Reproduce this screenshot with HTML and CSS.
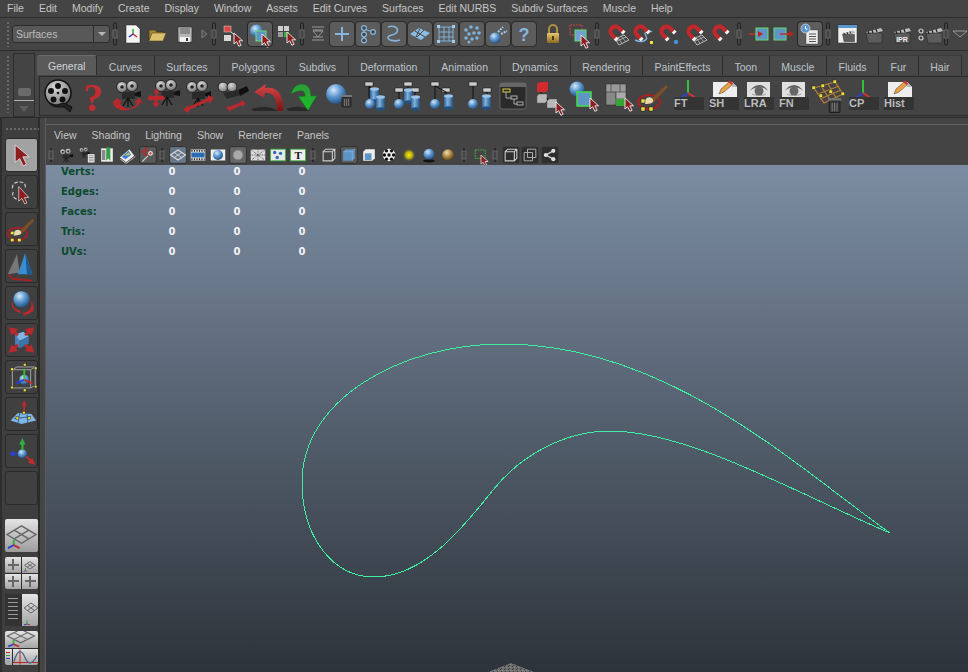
FILE: index.html
```html
<!DOCTYPE html>
<html lang="en">
<head>
<meta charset="utf-8">
<title>Maya</title>
<link rel="stylesheet" href="styles.css">
</head>
<body>
<svg class="defs" aria-hidden="true">
<defs>
<radialGradient id="gBall" cx=".38" cy=".3" r=".8"><stop offset="0" stop-color="#d5e8f8"/><stop offset=".45" stop-color="#5c97cf"/><stop offset="1" stop-color="#173f6f"/></radialGradient>
<radialGradient id="gYel" cx=".5" cy=".5" r=".5"><stop offset="0" stop-color="#f4f000"/><stop offset=".55" stop-color="#b5ae10"/><stop offset="1" stop-color="#55553a" stop-opacity=".2"/></radialGradient>
<radialGradient id="gBrn" cx=".4" cy=".3" r=".8"><stop offset="0" stop-color="#f0dfb0"/><stop offset=".5" stop-color="#a67f3a"/><stop offset="1" stop-color="#3a2c12"/></radialGradient>
<radialGradient id="gReel" cx=".4" cy=".3" r=".8"><stop offset="0" stop-color="#d8d8d8"/><stop offset="1" stop-color="#6a6a6a"/></radialGradient>
<linearGradient id="gCyl" x1="0" x2="1" y1="0" y2="0"><stop offset="0" stop-color="#2f6398"/><stop offset=".4" stop-color="#7fb2de"/><stop offset="1" stop-color="#24507f"/></linearGradient>
<linearGradient id="gRed" x1="0" x2="0" y1="0" y2="1"><stop offset="0" stop-color="#d8484a"/><stop offset="1" stop-color="#7a1214"/></linearGradient>
<linearGradient id="gGold" x1="0" x2="0" y1="0" y2="1"><stop offset="0" stop-color="#e8c872"/><stop offset="1" stop-color="#8a6a20"/></linearGradient>
<linearGradient id="gGrn" x1="0" x2="0" y1="0" y2="1"><stop offset="0" stop-color="#2f9a3a"/><stop offset="1" stop-color="#18c028"/></linearGradient>
<pattern id="pNoise" width="4" height="3" patternUnits="userSpaceOnUse"><rect width="4" height="3" fill="#6e6e6e"/><rect width="1" height="1" fill="#3a3f46"/><rect x="2" y="1" width="1" height="1" fill="#8c8c8c"/><rect x="1" y="2" width="1" height="1" fill="#3a3f46"/></pattern>

<path id="cur" d="M0 0v11l2.600-2.300 2.300 4.600 2.200-1-2.200-4.500H8.600z" fill="#8d1c1e" stroke="#eee" stroke-width=".9"/>
<g id="sep"><rect x="10.500" y="1" width="3" height="22" rx="1" fill="none" stroke="#222" stroke-width="1"/><rect x="10" y="8" width="4" height="8" fill="#444" stroke="#777" stroke-width=".7"/></g>
<g id="sepS"><rect x="11" y="3" width="2" height="14" fill="#2a2a2a"/><rect x="10" y="6" width="4" height="8" fill="#444" stroke="#777" stroke-width=".7"/></g>

<g id="doc"><path d="M5 3h10l4 4v14H5z" fill="#f4f4f4" stroke="#222" stroke-width=".5"/><path d="M12 12V7" stroke="#2a2" stroke-width="1.400"/><path d="M12 12l-4 3" stroke="#22c" stroke-width="1.400"/><path d="M12 12l4 3" stroke="#c22" stroke-width="1.400"/></g>
<g id="folder"><path d="M4 18V8h6l2 2h6v3H8z" fill="#a08838" stroke="#3a3010" stroke-width=".6"/><path d="M4 19l3-8h14l-3 8z" fill="#dcc070" stroke="#5a4a18" stroke-width=".6"/></g>
<g id="save"><path d="M5 5h14v15H5z" fill="#b5b5b5" stroke="#333" stroke-width=".7"/><rect x="7" y="5" width="10" height="7" fill="#8a8a8a"/><rect x="7" y="15" width="10" height="5" fill="#f0f0f0"/><rect x="13" y="16" width="2" height="3" fill="#333"/></g>
<path id="triR" d="M10 8l5 4-5 4z" fill="#505050" stroke="#888" stroke-width=".8"/>
<g id="hier"><rect x="3" y="4" width="7" height="6" fill="#d84a4a" stroke="#eee" stroke-width=".4"/><rect x="3" y="13" width="7" height="6" fill="#d8d8d8"/><path d="M10 10l5 4" stroke="#ddd"/><use href="#cur" x="13" y="11"/></g>
<g id="obj"><circle cx="8.500" cy="9" r="6.500" fill="url(#gBall)"/><rect x="8" y="9" width="10" height="10" fill="#5f94c6" stroke="#6fdc6f" stroke-width="1"/><use href="#cur" x="14" y="12"/></g>
<g id="comp"><rect x="4" y="4" width="5" height="5" fill="#cfcfcf"/><rect x="10" y="4" width="5" height="5" fill="#cfcfcf"/><rect x="4" y="10" width="5" height="5" fill="#9a9a9a"/><rect x="10" y="10" width="5" height="5" fill="#38b038"/><use href="#cur" x="13" y="10"/></g>
<g id="lines"><path d="M6 5h12M7 8h10M6 18h12M7 15h10" stroke="#999"/><path d="M7 9h10l-5 6z" fill="#444" stroke="#aaa" stroke-width=".8"/></g>
<g id="plus"><path d="M12 5v14M5 12h14" stroke="#87b5dc" stroke-width="2"/></g>
<g id="cv"><path d="M8 6v12M8 7l9 3" stroke="#87b5dc" stroke-width="1.200"/><circle cx="8" cy="6" r="2.400" fill="#444" stroke="#87b5dc" stroke-width="1.200"/><circle cx="8" cy="12.500" r="2.400" fill="#444" stroke="#87b5dc" stroke-width="1.200"/><circle cx="8" cy="18.500" r="2.400" fill="#444" stroke="#87b5dc" stroke-width="1.200"/><circle cx="17" cy="10" r="2.400" fill="#444" stroke="#87b5dc" stroke-width="1.200"/></g>
<path id="ep" d="M6 5c6-2 11 1 9 5s-8 2-9 5 6 5 12 3" fill="none" stroke="#87b5dc" stroke-width="1.600"/>
<g id="quad"><path d="M2 12L11 6l11 5-9 7z" fill="#8abce4"/><path d="M7 9l10 6M12 6.500L8 15M16 8l-7 7" stroke="#444" stroke-width="1"/></g>
<g id="latt"><path d="M5 5h14v14H5zM10 5v14M15 5v14M5 10h14M5 15h14" fill="none" stroke="#7fb0d8" stroke-width="1"/><g fill="#9fcdf0"><rect x="3" y="3" width="3" height="3"/><rect x="18" y="3" width="3" height="3"/><rect x="3" y="18" width="3" height="3"/><rect x="18" y="18" width="3" height="3"/></g></g>
<g id="dots" fill="#7fb0d8"><circle cx="6" cy="8" r="1.800"/><circle cx="11" cy="5" r="1.800"/><circle cx="17" cy="6" r="1.800"/><circle cx="9" cy="12" r="1.800"/><circle cx="14" cy="11" r="1.800"/><circle cx="19" cy="11" r="1.800"/><circle cx="6" cy="16" r="1.800"/><circle cx="12" cy="17" r="1.800"/><circle cx="17" cy="16" r="1.800"/><circle cx="9" cy="20" r="1.600"/></g>
<g id="spray"><circle cx="9" cy="16" r="5.500" fill="url(#gBall)"/><path d="M12 10l5-5M15 12l6-3" stroke="#9fcdf0" stroke-width="2" stroke-dasharray="2 1"/></g>
<text id="qm" x="12" y="19" font-family="Liberation Sans" font-weight="700" font-size="18" text-anchor="middle" fill="#87b5dc">?</text>
<g id="lock"><path d="M8 11V7a4 4 0 018 0v4" fill="none" stroke="#b09040" stroke-width="2"/><rect x="6" y="11" width="12" height="10" rx="1" fill="url(#gGold)"/><rect x="11" y="14" width="2" height="4" fill="#4a3a10"/></g>
<g id="selbox"><rect x="2" y="3" width="12" height="10" fill="none" stroke="#d04040" stroke-dasharray="2 1"/><rect x="7" y="8" width="11" height="11" fill="#6fa0cf" stroke="#66dd66" stroke-width="1"/><use href="#cur" x="13" y="13"/></g>
<g id="mag"><path d="M11.500 17.500L6.500 12.500A5 5 0 0 1 13.500 5.500L18.500 10.500" fill="none" stroke="#c0282c" stroke-width="4"/><path d="M12.200 18.200l-2-2M19.200 11.200l-2-2" stroke="#f2f2f2" stroke-width="4"/></g>
<g id="mgrid"><path d="M10 17l9-4 5 5-10 5z" fill="#444" stroke="#bbb" stroke-width="1"/><path d="M13 15.500l4 6M16 14l5 6M12 19l9-4" stroke="#bbb" stroke-width=".8"/><use href="#mag"/></g>
<g id="mcurve"><path d="M5 18c6 3 14 1 11-4s2-7 6-4" fill="none" stroke="#7fb0d8" stroke-width="1.400"/><use href="#mag"/><rect x="20" y="19" width="3" height="3" fill="#f0e040"/></g>
<g id="mpt"><use href="#mag"/><circle cx="20" cy="20" r="2.200" fill="#4a90d8"/></g>
<g id="iofrom"><path d="M1 12h8" stroke="#c03030" stroke-width="1.500"/><rect x="8" y="6" width="12" height="12" fill="#5f94c6" stroke="#66dd66"/><path d="M10 9l5 3-5 3z" fill="#c02020"/></g>
<g id="ioto"><rect x="2" y="6" width="12" height="12" fill="#5f94c6" stroke="#66dd66"/><path d="M8 12h10" stroke="#c03030" stroke-width="1.500"/><path d="M17 9l5 3-5 3z" fill="#c02020"/></g>
<g id="hist"><path d="M8 8h12v14H8z" fill="#ececec" stroke="#333" stroke-width=".4"/><path d="M11 12h7M11 14.500h7M11 17h7M11 19.500h7" stroke="#555"/><circle cx="7.500" cy="6.500" r="4.500" fill="#5c97cf" stroke="#ddd" stroke-width=".7"/><path d="M7.500 4v3h2" stroke="#fff" fill="none"/></g>
<g id="clap"><path d="M4 10l15-4 2 3-15 4z" fill="#bbb"/><path d="M4 11h16v10H6z" fill="#5c5c5c" stroke="#222" stroke-width=".5"/><path d="M6 9l1 3M10 8l1 3M14 7l1 3" stroke="#222" stroke-width="1.200"/></g>
<g id="clapW"><rect x="2" y="3" width="19" height="18" fill="#f0f0f0" stroke="#222" stroke-width=".5"/><rect x="2" y="3" width="19" height="3" fill="#5c97cf"/><use href="#clap" transform="translate(3.500 4) scale(.75)"/></g>
<g id="clapI"><use href="#clap"/><text x="12" y="20" font-family="Liberation Sans" font-weight="700" font-size="7" text-anchor="middle" fill="#eee">IPR</text></g>
<g id="clapO"><use href="#clap" transform="translate(5 0)"/><circle cx="4" cy="9" r="2" fill="none" stroke="#ccc" stroke-width="1.200"/><circle cx="4" cy="16" r="2" fill="none" stroke="#ccc" stroke-width="1.200"/></g>
<path id="triD" d="M5 9h14l-7 6z" fill="#444" stroke="#999"/>

<g id="reel"><circle cx="17" cy="14" r="13" fill="url(#gReel)" stroke="#111" stroke-width="1.500"/><g fill="#111"><circle cx="17" cy="7" r="3"/><circle cx="24" cy="12" r="3"/><circle cx="21.500" cy="20.500" r="3"/><circle cx="12.500" cy="20.500" r="3"/><circle cx="10" cy="12" r="3"/></g><circle cx="17" cy="14" r="1.300" fill="#111"/><path d="M8 24c4 5 10 4 15 4l6 5 2-5-8-4-8 2z" fill="#222" stroke="#111"/></g>
<text id="qr" x="17" y="32" font-family="Liberation Serif" font-weight="700" font-size="40" text-anchor="middle" fill="#c22c30">?</text>
<g id="cam"><circle cx="11" cy="8" r="5.500" fill="url(#gReel)" stroke="#222"/><circle cx="21" cy="7" r="5.500" fill="url(#gReel)" stroke="#222"/><circle cx="11" cy="8" r="1.800" fill="#222"/><circle cx="21" cy="7" r="1.800" fill="#222"/><path d="M11 13h13v7H11z" fill="#2a2a2a"/><path d="M24 14l6-2v6l-6-1z" fill="#111"/><path d="M17 19v9M17 19l-5 8M17 19l5 8" stroke="#111" stroke-width="1.200"/></g>
<g id="cam1"><use href="#cam"/><path d="M2 23c1 8 10 9 15 8s11-3 12-8l3 2-3-6-6 4 3 .5c-1 4-5 6-9 6s-7-3-8-6l2-.5-5-4z" fill="#b8282c"/></g>
<g id="cam2"><use href="#cam" transform="translate(4 -1)"/><path d="M10 9l3.500 5h-2v3h4l-1-2 5 4-5 4 1-2h-4v3h2l-3.500 5-3.500-5h2v-3H5l1 2-5-4 5-4-1 2h4.500v-3h-2z" fill="#b8282c"/></g>
<g id="cam3"><use href="#cam"/><path d="M2 31l5-5v2l20-9v-3l6 3-5 6v-3L8 31v3z" fill="#b8282c"/></g>
<g id="cam4"><circle cx="7" cy="8" r="5" fill="url(#gReel)" stroke="#222"/><circle cx="16" cy="8" r="5" fill="url(#gReel)" stroke="#222"/><path d="M7 14l14-3 3 5-13 4z" fill="#2a2a2a"/><path d="M22 11l9-4 2 5-9 5z" fill="#111"/><path d="M10 29l3-3v2l12-5v-2l5 3-4 4v-2L15 31v2z" fill="#b8282c"/></g>
<g id="undo"><path d="M0 30c8-2 14-3 24 0l3 2H3z" fill="#1e1e1e" opacity=".7"/><path d="M3 13L15 5l-1 4c11-2 19 5 18 23h-6c0-13-4-19-12-18l-1 5z" fill="url(#gRed)"/></g>
<g id="redo"><path d="M0 30c8-3 14-3 22 0l2 2H3z" fill="#1e1e1e" opacity=".7"/><path d="M5 15C7 6 15 3 20 6c4 2 5 7 5 11l6-.5-9 15-10-14 7-.5c0-3-1-5-4-5s-6 1-10 3z" fill="url(#gGrn)" stroke="#125c1a" stroke-width=".5"/></g>
<g id="trash"><rect x="1" y="3" width="9" height="10" rx="1" fill="#3a3a3a" stroke="#111" stroke-width=".6"/><rect y="1" width="11" height="2" fill="#777"/><path d="M3.500 5v7M5.500 5v7M7.500 5v7" stroke="#8a8a8a" stroke-width=".7"/></g>
<g id="balltr"><circle cx="15" cy="15" r="10" fill="url(#gBall)"/><use href="#trash" x="20" y="15"/></g>
<g id="ball"><circle cx="5" cy="5" r="5" fill="url(#gBall)"/></g>
<g id="cyl"><rect width="9" height="12" fill="url(#gCyl)"/><ellipse cx="4.500" cy="12" rx="4.500" ry="1.800" fill="#24507f"/><ellipse cx="4.500" cy="0" rx="4.500" ry="1.800" fill="#9ac4e8"/></g>
<rect id="tag" width="8" height="4" fill="#ccc" stroke="#111" stroke-width=".5"/>
<g id="g1"><use href="#tag" x="9" y="3"/><path d="M13 7v12M13 7l9 9M13 7l4 6" stroke="#111"/><use href="#cyl" x="14" y="10"/><use href="#cyl" x="20" y="18"/><use href="#ball" x="9" y="20"/></g>
<g id="g2"><use href="#tag" x="13" y="3"/><use href="#tag" x="4" y="9"/><use href="#tag" x="20" y="9"/><path d="M17 7v8M8 13v8M24 13v8" stroke="#111"/><use href="#cyl" x="13" y="11"/><use href="#cyl" x="20" y="18"/><use href="#ball" x="3" y="20"/></g>
<g id="g3"><use href="#tag" x="5" y="3"/><use href="#tag" x="16" y="9"/><path d="M9 7v14M9 7l11 6M20 13v6" stroke="#111"/><use href="#cyl" x="18" y="17"/><use href="#ball" x="4" y="20"/></g>
<g id="g4"><use href="#tag" x="8" y="3"/><use href="#tag" x="22" y="9"/><path d="M12 7v14M26 13v6" stroke="#111"/><use href="#cyl" x="21" y="17"/><use href="#ball" x="7" y="20"/></g>
<g id="outl"><rect x="4" y="4" width="26" height="26" rx="2" fill="#2a2a2a" stroke="#777" stroke-width=".7"/><rect x="4" y="4" width="26" height="4" fill="#666"/><rect x="7" y="10" width="7" height="3" fill="none" stroke="#e0d040"/><path d="M10 13v6h5M18 20v5h3" fill="none" stroke="#aaa"/><rect x="15" y="17" width="6" height="3" fill="none" stroke="#aaa"/><rect x="21" y="23" width="6" height="3" fill="none" stroke="#aaa"/></g>
<g id="nodes"><path d="M6 5l3-2h8v8l-2 2H6z" fill="#d22a2e"/><path d="M6 17l2-2h8v7l-2 2H6z" fill="#b8b8b8" stroke="#555" stroke-width=".5"/><path d="M16 22l2-2h8v7l-2 2h-8z" fill="#b8b8b8" stroke="#555" stroke-width=".5"/><path d="M10 13v2M16 19l1 2" stroke="#111"/><use href="#cur" x="25" y="23"/></g>
<g id="ballbox"><circle cx="11" cy="10" r="7.500" fill="url(#gBall)"/><path d="M11 13h14v14H11z" fill="#5f94c6" stroke="#44dd44" stroke-width="1.500"/><use href="#cur" x="24" y="19"/></g>
<g id="cube"><path d="M5 5h20v9H5z" fill="#9a9a9a" stroke="#333" stroke-width=".6"/><path d="M5 13h10v13H5z" fill="#888" stroke="#333" stroke-width=".6"/><path d="M15 13h10v7H15z" fill="#aaa" stroke="#333" stroke-width=".6"/><path d="M15 20h10v7H15z" fill="#36a536"/><path d="M10 5v8M19 5v8" stroke="#333" stroke-width=".6"/><use href="#cur" x="24" y="19"/></g>
<g id="paint"><ellipse cx="13" cy="23" rx="11" ry="7" fill="none" stroke="#a82024" stroke-width="2"/><path d="M14 21L30 6l2 2-15 16z" fill="#7a5028"/><path d="M9 21c3-4 7-3 8 0s-3 4-8 4z" fill="#e8d8b0"/><g fill="#e8e040" stroke="#222" stroke-width=".5"><rect x="5" y="20" width="4" height="4"/><rect x="13" y="28" width="4" height="4"/><rect x="5" y="28" width="4" height="4"/></g></g>
<g id="axes"><path d="M17 14V1" stroke="#35c035" stroke-width="2"/><path d="M17 14l-11 7" stroke="#2a40d8" stroke-width="2"/><path d="M17 14l11 7" stroke="#d83232" stroke-width="2"/></g>
<g id="pad"><path d="M7 3h19l5 5v10H7z" fill="#eee"/><path d="M26 3l5 5h-5z" fill="#bbb"/><path d="M13 15l2-5 8-7 3 3-8 7z" fill="#e8a040" stroke="#444" stroke-width=".5"/><path d="M22 3l2-1.500 3 3-1 1.500z" fill="#d03030"/></g>
<g id="eye"><rect x="6" y="3" width="23" height="15" fill="#e0e0e0"/><path d="M9 12c4-8 14-8 18 0-5-5-13-5-18 0z" fill="#666"/><circle cx="18" cy="12" r="4.500" fill="#666"/><path d="M11 15c4 2 10 2 14 0" stroke="#999" fill="none"/></g>
<g id="lgrid"><path d="M3 9L24 3l8 12-19 9zM10 7l10 15M17 5l8 14M7 15l21-8M9 20l21-9" fill="none" stroke="#b87f38" stroke-width="1.200"/><g fill="#e8e040" stroke="#222" stroke-width=".5"><rect x="1" y="7" width="3.500" height="3.500"/><rect x="10" y="5" width="3.500" height="3.500"/><rect x="22" y="1" width="3.500" height="3.500"/><rect x="30" y="13" width="3.500" height="3.500"/><rect x="18" y="11" width="3.500" height="3.500"/><rect x="8" y="15" width="3.500" height="3.500"/></g><use href="#trash" transform="translate(17 18) scale(1.200)"/></g>

<g id="v1"><use href="#cam" transform="translate(1 3) scale(.65)"/></g>
<g id="v2"><use href="#cam" transform="translate(0 2) scale(.5)"/><path d="M13 11h8v10h-8z" fill="#eee"/><path d="M14 13h6M14 15h6M14 17h6M14 19h6" stroke="#555" stroke-width=".7"/></g>
<g id="v3"><path d="M5 4h14v16H5z" fill="#eee"/><path d="M11 3h5v16l-2.500-3-2.500 3z" fill="#38a048"/><rect x="6" y="6" width="4" height="12" fill="#888"/></g>
<g id="v4"><path d="M3 15L15 5l6 8-10 8z" fill="#eee" stroke="#333" stroke-width=".5"/><path d="M6 14l8-7 3 5-7 5z" fill="#3c7ad0"/><path d="M9 13l5-4 2 3z" fill="#c8d030"/><path d="M4 17l7 5 11-8" fill="none" stroke="#ccc"/></g>
<g id="v5"><rect x="2" y="2" width="20" height="20" rx="2" fill="#5a5a5a" stroke="#2a2a2a"/><path d="M9 3v10M4 8h10M9 3l-2 2h4zM4 8l2-2v4zM14 8l-2-2v4zM9 13l-2-2h4z" stroke="#b02a2a" fill="#b02a2a"/><circle cx="15" cy="10" r="3.500" fill="#ddd" stroke="#444"/><path d="M13.500 10h3M15 8.500v3" stroke="#c22"/><path d="M12 13l-7 7" stroke="#ccc" stroke-width="1.500"/></g>
<g id="v6"><rect x="2" y="2" width="20" height="20" rx="2" fill="#68788a" stroke="#2a2a2a"/><path d="M3 12l9-6 9 6-9 6z" fill="none" stroke="#ddd" stroke-width="1.300"/><path d="M7.500 9l9 6M16.500 9l-9 6" stroke="#ddd" stroke-width="1"/></g>
<g id="v7"><rect x="3" y="5" width="18" height="14" fill="#eee" stroke="#222" stroke-width=".4"/><rect x="4" y="9" width="16" height="6" fill="#2c6cb0"/><path d="M4 7h16M4 17h16" stroke="#222" stroke-width="2" stroke-dasharray="1.500 1.500"/></g>
<g id="v8"><rect x="3" y="5" width="18" height="14" fill="#eee" stroke="#222" stroke-width=".4"/><circle cx="12" cy="12" r="6" fill="url(#gBall)"/></g>
<g id="v9"><rect x="2" y="2" width="20" height="20" rx="2" fill="#666" stroke="#2a2a2a"/><circle cx="12" cy="12" r="6" fill="#aaa" stroke="#777"/></g>
<g id="v10"><rect x="3" y="5" width="18" height="14" fill="#ddd" stroke="#222" stroke-width=".4"/><path d="M4 6l16 12M20 6L4 18M12 5v14M3 12h18" stroke="#333" stroke-width="1" stroke-dasharray="1 1"/></g>
<g id="v11"><rect x="3" y="5" width="18" height="14" fill="#e8e8e8" stroke="#3ab03a" stroke-width="1"/><circle cx="8" cy="9" r="2" fill="#2c6cb0"/><circle cx="15" cy="10" r="2" fill="#2c6cb0"/><circle cx="11" cy="15" r="2" fill="#2c6cb0"/></g>
<g id="v12"><rect x="3" y="5" width="18" height="14" fill="#eee" stroke="#3ab03a" stroke-width="1"/><text x="12" y="17" font-family="Liberation Serif" font-weight="700" font-size="13" text-anchor="middle" fill="#111">T</text></g>
<g id="vw"><path d="M5 8l3-3h11v11l-3 3H5zM5 8h11v11M16 8l3-3" fill="none" stroke="#ccc" stroke-width="1.300"/></g>
<g id="vs"><rect x="2" y="2" width="20" height="20" rx="2" fill="#5a5a5a" stroke="#2a2a2a"/><path d="M5 8l3-3h11v11l-3 3H5z" fill="#5f94c6"/><path d="M5 8h11v11M16 8l3-3" fill="none" stroke="#8fbbe0" stroke-width=".7"/></g>
<g id="vt"><path d="M5 8l3-3h11v11l-3 3H5z" fill="#eee"/><path d="M7 10h8v8H7z" fill="#5f94c6"/></g>
<g id="vc"><circle cx="12" cy="12" r="7.500" fill="#eee"/><g fill="#111"><circle cx="9" cy="7" r="2"/><circle cx="15" cy="7" r="2"/><circle cx="6.500" cy="12" r="2"/><circle cx="12" cy="12" r="2"/><circle cx="17.500" cy="12" r="2"/><circle cx="9" cy="17" r="2"/><circle cx="15" cy="17" r="2"/></g></g>
<circle id="vy" cx="12" cy="12" r="7.500" fill="url(#gYel)"/>
<g id="vb"><ellipse cx="12" cy="19" rx="7" ry="2" fill="#111"/><circle cx="12" cy="11" r="6.500" fill="url(#gBall)"/></g>
<circle id="vg" cx="12" cy="12" r="7" fill="url(#gBrn)"/>
<g id="vsel"><rect x="5" y="6" width="12" height="10" fill="none" stroke="#44cc44" stroke-dasharray="2 1"/><use href="#cur" x="12" y="12"/></g>
<g id="vd1"><rect x="2" y="2" width="20" height="20" rx="2" fill="#2e2e2e"/><use href="#vw"/></g>
<g id="vd2"><rect x="2" y="2" width="20" height="20" rx="2" fill="#2e2e2e"/><path d="M5 9h10v10H5zM9 5h10v10H9z" fill="none" stroke="#aaa" stroke-width="1.200"/></g>
<g id="vd3"><rect x="2" y="2" width="20" height="20" rx="2" fill="#2e2e2e"/><path d="M7 12l9-5M7 12l9 5" stroke="#ddd" stroke-width="1.500"/><circle cx="7" cy="12" r="2.500" fill="#ddd"/><circle cx="16" cy="7" r="2.500" fill="#ddd"/><circle cx="16" cy="17" r="2.500" fill="#ddd"/></g>

<g id="t1"><path d="M10 6v19l5-4 4 8 3.500-2-4-8h7z" fill="#8d1c1e" stroke="#ddd" stroke-width="1"/></g>
<g id="t2"><path d="M7 13c0-6 4-7 8-7s7 2 6 6M8 17c-2 3 0 7 4 8" fill="none" stroke="#ccc" stroke-width="1.300" stroke-dasharray="4 2"/><path d="M14 11v16l3.500-3 3 6 2.500-1-3-6h5z" fill="#8d1c1e" stroke="#ddd" stroke-width=".8"/></g>
<g id="t4"><path d="M2 26L12 4l3 20z" fill="#777"/><path d="M13 26L21 3l8 23z" fill="#3a8ed0"/><path d="M21 3l2 23h6z" fill="#1c5a94"/><path d="M3 26l4 5 21 2" fill="none" stroke="#a82024" stroke-width="2"/></g>
<g id="t5"><circle cx="17" cy="13" r="9" fill="url(#gBall)"/><path d="M7 14c-3 7 2 13 10 14l-2-3c-5 0-8-4-8-11z" fill="#b8282c"/><path d="M27 14c3 7-1 13-9 14l3 3 9-5c1-4 0-9-3-12z" fill="#b8282c"/></g>
<g id="t6"><path d="M10 11l9-3 6 5-10 5z" fill="#7fb6e6"/><path d="M10 11v11l5 4V18z" fill="#4a84ba"/><path d="M15 18v8l10-5v-8z" fill="#3a74aa"/><g fill="#b8282c"><path d="M3 3l10 2-2 3 3 3-2 2-3-3-3 2z"/><path d="M31 3l-10 2 2 3-3 3 2 2 3-3 3 2z"/><path d="M3 31l10-2-2-3 3-3-2-2-3 3-3-2z"/><path d="M31 31l-10-2 2-3-3-3 2-2 3 3 3-2z"/></g></g>
<g id="t7"><path d="M7 9h20v20H7zM7 9l5-3h20v20l-5 3M27 9l5-3" fill="none" stroke="#aaa"/><circle cx="20" cy="20" r="5.500" fill="url(#gBall)"/><path d="M20 20V8" stroke="#35c035" stroke-width="2"/><path d="M20 20l-9 4" stroke="#2a40d8" stroke-width="2"/><path d="M20 20l9 4" stroke="#c82a2a" stroke-width="2"/><g fill="#f0e040" stroke="#222" stroke-width=".5"><rect x="5" y="7" width="3" height="3"/><rect x="19" y="2" width="3" height="3"/><rect x="31" y="6" width="3" height="3"/><rect x="5" y="27" width="3" height="3"/><rect x="19" y="30" width="3" height="3"/><rect x="31" y="26" width="3" height="3"/></g></g>
<g id="t8"><path d="M20 3v16" stroke="#b8282c" stroke-width="2"/><path d="M17 8l3-6 3 6z" fill="#b8282c"/><path d="M5 24l8-8 15 1 5 7-16 4z" fill="#7fb6e6"/><path d="M9 22l18-2M15 16l-2 12M23 17l1 10" stroke="#2a5c8a"/><g fill="#f0e040" stroke="#222" stroke-width=".5"><rect x="18" y="14" width="3" height="3"/><rect x="11" y="20" width="3" height="3"/><rect x="24" y="20" width="3" height="3"/></g></g>
<g id="t9"><circle cx="18" cy="20" r="5" fill="url(#gBall)"/><path d="M18 16V7" stroke="#2fb03f" stroke-width="2.500"/><path d="M14.500 10L18 3l3.500 7z" fill="#2fb03f"/><path d="M13 20H7" stroke="#2a40d8" stroke-width="2"/><path d="M9 17l-6 3 6 3z" fill="#2a40d8"/><path d="M22 23l6 5" stroke="#c82a2a" stroke-width="2"/><path d="M24 30l8 2-3-7z" fill="#c82a2a"/></g>
<g id="l1"><path d="M2 16l15-9 15 9-15 9z M9.500 11.500l15 9M24.500 11.500l-15 9" fill="none" stroke="#666" stroke-width="1.500"/><path d="M9 27v-6" stroke="#2fb03f" stroke-width="2"/><path d="M9 27l-6 3" stroke="#2a40d8" stroke-width="2"/><path d="M9 27l6 3" stroke="#c82a2a" stroke-width="2"/></g>
<g id="l2"><path d="M2 9l6-4 6 4-6 4zM5 7l6 4M11 7l-6 4" fill="none" stroke="#666"/><path d="M3 15v-3" stroke="#2fb03f"/><path d="M3 15l-2 1" stroke="#2a40d8"/><path d="M3 15l2 1" stroke="#c82a2a"/></g>
<g id="l3"><path d="M2 14l7-5 7 5-7 5z M5.500 11.500l7 5M12.500 11.500l-7 5" fill="none" stroke="#666"/><path d="M5 30v-4" stroke="#2fb03f"/><path d="M5 30l-3 1" stroke="#2a40d8"/><path d="M5 30l3 1" stroke="#c82a2a"/></g>
</defs>
</svg>

<nav class="menubar">
<span>File</span><span>Edit</span><span>Modify</span><span>Create</span><span>Display</span><span>Window</span><span>Assets</span><span>Edit Curves</span><span>Surfaces</span><span>Edit NURBS</span><span>Subdiv Surfaces</span><span>Muscle</span><span>Help</span>
</nav>

<section class="status">
<i class="grip"></i>
<div class="combo"><span class="combo-text">Surfaces</span><span class="combo-arrow"></span></div>
<div class="icons st-first">
<svg class="ic" viewBox="0 0 24 24"><use href="#sep"/></svg>
<svg class="ic d18" viewBox="0 0 24 24"><use href="#doc"/></svg>
<svg class="ic d24" viewBox="0 0 24 24"><use href="#folder"/></svg>
<svg class="ic d28" viewBox="0 0 24 24"><use href="#save"/></svg>
<svg class="ic d19" viewBox="0 0 24 24"><use href="#triR"/></svg>
<svg class="ic d10" viewBox="0 0 24 24"><use href="#sep"/></svg>
<svg class="ic d19" viewBox="0 0 24 24"><use href="#hier"/></svg>
<span class="btn on d27"><svg class="ic" viewBox="0 0 24 24"><use href="#obj"/></svg></span>
<svg class="ic d26" viewBox="0 0 24 24"><use href="#comp"/></svg>
<svg class="ic d16" viewBox="0 0 24 24"><use href="#sep"/></svg>
<svg class="ic d16" viewBox="0 0 24 24"><use href="#lines"/></svg>
<span class="btn d24"><svg class="ic" viewBox="0 0 24 24"><use href="#plus"/></svg></span>
<span class="btn d26"><svg class="ic" viewBox="0 0 24 24"><use href="#cv"/></svg></span>
<span class="btn d26"><svg class="ic" viewBox="0 0 24 24"><use href="#ep"/></svg></span>
<span class="btn d26"><svg class="ic" viewBox="0 0 24 24"><use href="#quad"/></svg></span>
<span class="btn d26"><svg class="ic" viewBox="0 0 24 24"><use href="#latt"/></svg></span>
<span class="btn d26"><svg class="ic" viewBox="0 0 24 24"><use href="#dots"/></svg></span>
<span class="btn d26"><svg class="ic" viewBox="0 0 24 24"><use href="#spray"/></svg></span>
<span class="btn d26"><svg class="ic" viewBox="0 0 24 24"><use href="#qm"/></svg></span>
<svg class="ic d29" viewBox="0 0 24 24"><use href="#lock"/></svg>
<svg class="ic d27" viewBox="0 0 24 24"><use href="#selbox"/></svg>
<svg class="ic d17" viewBox="0 0 24 24"><use href="#sep"/></svg>
<svg class="ic d20" viewBox="0 0 24 24"><use href="#mgrid"/></svg>
<svg class="ic d25" viewBox="0 0 24 24"><use href="#mcurve"/></svg>
<svg class="ic d26" viewBox="0 0 24 24"><use href="#mpt"/></svg>
<svg class="ic d27" viewBox="0 0 24 24"><use href="#mgrid"/></svg>
<svg class="ic d26" viewBox="0 0 24 24"><use href="#mag"/></svg>
<svg class="ic d18" viewBox="0 0 24 24"><use href="#sep"/></svg>
<svg class="ic d21" viewBox="0 0 24 24"><use href="#iofrom"/></svg>
<svg class="ic d24" viewBox="0 0 24 24"><use href="#ioto"/></svg>
<span class="btn on d26"><svg class="ic" viewBox="0 0 24 24"><use href="#hist"/></svg></span>
<svg class="ic d18" viewBox="0 0 24 24"><use href="#sep"/></svg>
<svg class="ic d20" viewBox="0 0 24 24"><use href="#clapW"/></svg>
<svg class="ic d26" viewBox="0 0 24 24"><use href="#clap"/></svg>
<svg class="ic d28" viewBox="0 0 24 24"><use href="#clapI"/></svg>
<svg class="ic d27" viewBox="0 0 24 24"><use href="#clapO"/></svg>
<svg class="ic d17" viewBox="0 0 24 24"><use href="#sep"/></svg>
<svg class="ic d14" viewBox="0 0 24 24"><use href="#triD"/></svg>
</div>
</section>

<section class="shelf">
<i class="grip grip-shelf"></i>
<div class="shelf-side"><span class="side-knob"></span><span class="side-rule"></span><span class="side-tri"></span></div>
<div class="shelf-main">
<div class="tabs">
<span class="tab tab-on">General</span><span class="tab">Curves</span><span class="tab">Surfaces</span><span class="tab">Polygons</span><span class="tab">Subdivs</span><span class="tab">Deformation</span><span class="tab">Animation</span><span class="tab">Dynamics</span><span class="tab">Rendering</span><span class="tab">PaintEffects</span><span class="tab">Toon</span><span class="tab">Muscle</span><span class="tab">Fluids</span><span class="tab">Fur</span><span class="tab">Hair</span>
</div>
<div class="shelf-box">
<svg class="sh" viewBox="0 0 35 35"><use href="#reel"/></svg>
<svg class="sh" viewBox="0 0 35 35"><use href="#qr"/></svg>
<svg class="sh" viewBox="0 0 35 35"><use href="#cam1"/></svg>
<svg class="sh" viewBox="0 0 35 35"><use href="#cam2"/></svg>
<svg class="sh" viewBox="0 0 35 35"><use href="#cam3"/></svg>
<svg class="sh" viewBox="0 0 35 35"><use href="#cam4"/></svg>
<svg class="sh" viewBox="0 0 35 35"><use href="#undo"/></svg>
<svg class="sh" viewBox="0 0 35 35"><use href="#redo"/></svg>
<svg class="sh" viewBox="0 0 35 35"><use href="#balltr"/></svg>
<svg class="sh" viewBox="0 0 35 35"><use href="#g1"/></svg>
<svg class="sh" viewBox="0 0 35 35"><use href="#g2"/></svg>
<svg class="sh" viewBox="0 0 35 35"><use href="#g3"/></svg>
<svg class="sh" viewBox="0 0 35 35"><use href="#g4"/></svg>
<svg class="sh" viewBox="0 0 35 35"><use href="#outl"/></svg>
<svg class="sh" viewBox="0 0 35 35"><use href="#nodes"/></svg>
<svg class="sh" viewBox="0 0 35 35"><use href="#ballbox"/></svg>
<svg class="sh" viewBox="0 0 35 35"><use href="#cube"/></svg>
<svg class="sh" viewBox="0 0 35 35"><use href="#paint"/></svg>
<span class="lab"><svg class="sh" viewBox="0 0 35 35"><use href="#axes"/></svg><b>FT</b></span>
<span class="lab"><svg class="sh" viewBox="0 0 35 35"><use href="#pad"/></svg><b>SH</b></span>
<span class="lab"><svg class="sh" viewBox="0 0 35 35"><use href="#eye"/></svg><b>LRA</b></span>
<span class="lab"><svg class="sh" viewBox="0 0 35 35"><use href="#eye"/></svg><b>FN</b></span>
<svg class="sh" viewBox="0 0 35 35"><use href="#lgrid"/></svg>
<span class="lab"><svg class="sh" viewBox="0 0 35 35"><use href="#axes"/></svg><b>CP</b></span>
<span class="lab"><svg class="sh" viewBox="0 0 35 35"><use href="#pad"/></svg><b>Hist</b></span>
</div>
</div>
</section>

<main class="work">
<aside class="toolbox">
<i class="tool-grip"></i>
<div class="tools">
<span class="tool tool-on"><svg viewBox="0 0 34 34"><use href="#t1"/></svg></span>
<span class="tool"><svg viewBox="0 0 34 34"><use href="#t2"/></svg></span>
<span class="tool"><svg viewBox="0 0 35 35"><use href="#paint"/></svg></span>
<span class="tool"><svg viewBox="0 0 34 34"><use href="#t4"/></svg></span>
<span class="tool"><svg viewBox="0 0 34 34"><use href="#t5"/></svg></span>
<span class="tool"><svg viewBox="0 0 34 34"><use href="#t6"/></svg></span>
<span class="tool"><svg viewBox="0 0 34 34"><use href="#t7"/></svg></span>
<span class="tool"><svg viewBox="0 0 34 34"><use href="#t8"/></svg></span>
<span class="tool"><svg viewBox="0 0 34 34"><use href="#t9"/></svg></span>
<span class="tool"></span>
</div>
<div class="layouts">
<span class="lay lay-single"><svg viewBox="0 0 34 34"><use href="#l1"/></svg></span>
<span class="lay lay-four">
<span class="cell cell-plus"></span>
<span class="cell"><svg viewBox="0 0 16 17"><use href="#l2"/></svg></span>
<span class="cell cell-plus"></span>
<span class="cell cell-plus"></span>
</span>
<span class="lay lay-out">
<span class="outline-list"></span>
<span class="cell"><svg viewBox="0 0 16 32"><use href="#l3"/></svg></span>
</span>
<span class="lay lay-graph">
<span class="cell cell-top"><svg viewBox="0 0 32 17"><use href="#l1" transform="translate(0 -7) scale(.9 .75)"/></svg></span>
<span class="cell-row">
<span class="cell cell-key"><svg viewBox="0 0 7 15"><path d="M1 3h4" stroke="#c22"/><path d="M1 6h4" stroke="#3a3"/><path d="M1 9h4" stroke="#33c"/><path d="M1 12h4" stroke="#999"/></svg></span>
<span class="cell cell-curve"><svg viewBox="0 0 25 15"><path d="M7 0v15M0 13h25" stroke="#c22"/><path d="M1 12C5-2 9 1 12 8s7 8 12-2" fill="none" stroke="#46698c" stroke-width="1.400"/></svg></span>
</span>
</span>
</div>
</aside>

<section class="panel">
<div class="panel-menu"><span>View</span><span>Shading</span><span>Lighting</span><span>Show</span><span>Renderer</span><span>Panels</span></div>
<div class="icons panel-tools">
<svg class="ic" viewBox="0 0 24 20"><use href="#sepS"/></svg>
<svg class="ic d15" viewBox="0 0 24 24"><use href="#v1"/></svg>
<svg class="ic d21" viewBox="0 0 24 24"><use href="#v2"/></svg>
<svg class="ic d20" viewBox="0 0 24 24"><use href="#v3"/></svg>
<svg class="ic d20" viewBox="0 0 24 24"><use href="#v4"/></svg>
<svg class="ic d21" viewBox="0 0 24 24"><use href="#v5"/></svg>
<svg class="ic d14" viewBox="0 0 24 20"><use href="#sepS"/></svg>
<svg class="ic d16" viewBox="0 0 24 24"><use href="#v6"/></svg>
<svg class="ic d20" viewBox="0 0 24 24"><use href="#v7"/></svg>
<svg class="ic d20" viewBox="0 0 24 24"><use href="#v8"/></svg>
<svg class="ic d20" viewBox="0 0 24 24"><use href="#v9"/></svg>
<svg class="ic d20" viewBox="0 0 24 24"><use href="#v10"/></svg>
<svg class="ic d20" viewBox="0 0 24 24"><use href="#v11"/></svg>
<svg class="ic d20" viewBox="0 0 24 24"><use href="#v12"/></svg>
<svg class="ic d15" viewBox="0 0 24 20"><use href="#sepS"/></svg>
<svg class="ic d16" viewBox="0 0 24 24"><use href="#vw"/></svg>
<svg class="ic d20" viewBox="0 0 24 24"><use href="#vs"/></svg>
<svg class="ic d20" viewBox="0 0 24 24"><use href="#vt"/></svg>
<svg class="ic d20" viewBox="0 0 24 24"><use href="#vc"/></svg>
<svg class="ic d20" viewBox="0 0 24 24"><use href="#vy"/></svg>
<svg class="ic d20" viewBox="0 0 24 24"><use href="#vb"/></svg>
<svg class="ic d19" viewBox="0 0 24 24"><use href="#vg"/></svg>
<svg class="ic d16" viewBox="0 0 24 20"><use href="#sepS"/></svg>
<svg class="ic d17" viewBox="0 0 24 24"><use href="#vsel"/></svg>
<svg class="ic d14" viewBox="0 0 24 20"><use href="#sepS"/></svg>
<svg class="ic d16" viewBox="0 0 24 24"><use href="#vd1"/></svg>
<svg class="ic d19" viewBox="0 0 24 24"><use href="#vd2"/></svg>
<svg class="ic d20" viewBox="0 0 24 24"><use href="#vd3"/></svg>
</div>
<div class="viewport">
<div class="hud">
<b>Verts:</b><em>0</em><em>0</em><em>0</em>
<b>Edges:</b><em>0</em><em>0</em><em>0</em>
<b>Faces:</b><em>0</em><em>0</em><em>0</em>
<b>Tris:</b><em>0</em><em>0</em><em>0</em>
<b>UVs:</b><em>0</em><em>0</em><em>0</em>
</div>
<svg class="scene" viewBox="46 165 922 507">
<polygon points="511,663 488,672 534,672" fill="url(#pNoise)"/>
<path d="M890 533C800 470 670 344 503 344 400 344 302 400 302 482 302 540 335 577 374 577 425 577 465 525 493 490 521 455 565 431 610 431 690 431 800 495 890 533Z" fill="none" stroke="#3cf0a0" stroke-width="1" shape-rendering="crispEdges"/>
</svg>
</div>
</section>
</main>
</body>
</html>
```

FILE: styles.css
```css
* { box-sizing: border-box; }
html, body { margin: 0; padding: 0; }
body {
  width: 968px;
  height: 672px;
  overflow: hidden;
  background: #444444;
  color: #c6c6c6;
  font: 10.5px "Liberation Sans", Arial, sans-serif;
  display: flex;
  flex-direction: column;
}
.defs { position: absolute; width: 0; height: 0; }

.menubar {
  flex: none;
  height: 18px;
  padding-left: 7px;
  display: flex;
  gap: 15px;
  align-items: center;
  border-bottom: 1px solid #2e2e2e;
  padding-bottom: 1px;
}

.grip {
  flex: none;
  width: 4px;
  background: radial-gradient(circle, #6a6a6a 1px, transparent 1.2px) 0 0 / 4px 4px;
}

.status {
  flex: none;
  height: 33px;
  display: flex;
  align-items: center;
  border-bottom: 1px solid #2e2e2e;
}
.status .grip { height: 26px; margin-left: 6px; }
.combo {
  flex: none;
  width: 98px;
  height: 18px;
  margin-left: 2px;
  display: flex;
  background: #585858;
  border: 1px solid #2c2c2c;
  border-radius: 3px;
}
.combo-text { flex: 1; padding: 2px 0 0 3px; color: #bdbdbd; }
.combo-arrow {
  width: 16px;
  border-left: 1px solid #2c2c2c;
  position: relative;
}
.combo-arrow::after {
  content: "";
  position: absolute;
  left: 4px;
  top: 6px;
  border: 4px solid transparent;
  border-top: 4px solid #b5b5b5;
  border-bottom: 0;
}

.icons { display: flex; align-items: center; flex: none; }
.st-first { margin-left: -7px; }
.ic { flex: none; width: 24px; height: 24px; overflow: visible; display: block; }
.btn {
  flex: none;
  width: 24px;
  height: 24px;
  background: #5c5c5c;
  outline: 1px solid #2e2e2e;
  border-radius: 3px;
}
.btn.on { background: #5d5d5d; outline: 1px solid #262626; }
.d10 { margin-left: -14px; }
.d14 { margin-left: -10px; }
.d15 { margin-left: -9px; }
.d16 { margin-left: -8px; }
.d17 { margin-left: -7px; }
.d18 { margin-left: -6px; }
.d19 { margin-left: -5px; }
.d20 { margin-left: -4px; }
.d21 { margin-left: -3px; }
.d24 { margin-left: 0; }
.d25 { margin-left: 1px; }
.d26 { margin-left: 2px; }
.d27 { margin-left: 3px; }
.d28 { margin-left: 4px; }
.d29 { margin-left: 5px; }

.shelf {
  flex: none;
  height: 67px;
  display: flex;
  border-bottom: 1px solid #2a2a2a;
}
.grip-shelf { height: 58px; margin: 4px 0 0 6px; }
.shelf-side {
  flex: none;
  width: 22px;
  height: 64px;
  margin: 2px 0 0 3px;
  border: 1px solid #2e2e2e;
  display: flex;
  flex-direction: column;
  align-items: center;
  padding-top: 34px;
}
.side-knob { width: 13px; height: 8px; background: #6a6a6a; border-radius: 2px; }
.side-rule { width: 20px; height: 1px; background: #b0b0b0; margin-top: 4px; }
.side-tri {
  margin-top: 5px;
  border: 5px solid transparent;
  border-top: 6px solid #5c5c5c;
  border-bottom: 0;
}
.shelf-main { flex: 1; min-width: 0; margin-left: 2px; padding-top: 4px; }
.tabs { display: flex; height: 20px; }
.tab {
  flex: none;
  padding: 5px 11.5px 0;
  background: #484848;
  border-top: 1px solid #3a3a3a;
  border-right: 1px solid #2c2c2c;
  color: #bcc4cc;
}
.tab-on {
  background: #5a5a5a;
  border-radius: 3px 3px 0 0;
  color: #d0d6dc;
  padding: 4px 11px 0;
  margin-right: 0;
  border-top: 1px solid #6a6a6a;
}
.shelf-box {
  margin: 1px 0 0 2px;
  height: 40px;
  display: flex;
  align-items: center;
  border: 1px solid #2a2a2a;
  border-right: 0;
  padding-left: 1px;
}
.sh { flex: none; width: 35px; height: 35px; overflow: visible; display: block; }
.lab { position: relative; flex: none; width: 35px; height: 35px; }
.lab b {
  position: absolute;
  left: 3px;
  top: 18px;
  width: 30px;
  height: 13px;
  background: #343434;
  border-radius: 1px;
  color: #bcbcbc;
  font-size: 11px;
  line-height: 13px;
}

.work { flex: 1; min-height: 0; display: flex; }
.toolbox {
  flex: none;
  width: 46px;
  padding: 9px 0 0 5px;
  border-right: 1px solid #5c5c5c;
  background: linear-gradient(90deg, #2e2e2e 0, #2e2e2e 2px, #3e3e3e 2px, #3e3e3e 38px, #2c2c2c 38px, #2c2c2c 40px, #454545 40px);
}
.tool-grip {
  display: block;
  width: 34px;
  height: 4px;
  background: radial-gradient(circle, #6a6a6a 1px, transparent 1.2px) 0 0 / 4px 4px;
}
.tools { display: flex; flex-direction: column; gap: 3px; margin-top: 7px; }
.tool {
  display: block;
  width: 33px;
  height: 34px;
  background: #404040;
  border: 1px solid #2a2a2a;
  border-radius: 3px;
}
.tool svg { display: block; width: 100%; height: 100%; overflow: visible; }
.tool-on { background: #a2a2a2; }
.layouts { display: flex; flex-direction: column; gap: 5px; margin-top: 14px; }
.lay {
  display: flex;
  width: 33px;
  border-radius: 2px;
  overflow: hidden;
  background: #2e2e2e;
  gap: 1px;
}
.lay svg { display: block; width: 100%; height: 100%; }
.lay-single { height: 33px; background: linear-gradient(#e4e4e4, #9c9c9c); }
.lay-four { height: 32px; flex-wrap: wrap; }
.lay-out { height: 32px; }
.lay-graph { height: 34px; flex-direction: column; }
.cell { flex: 1 1 15px; min-width: 15px; height: 100%; background-image: linear-gradient(#e4e4e4, #a4a4a4); }
.lay-four .cell { height: 15.5px; }
.cell-plus {
  background-image: linear-gradient(#666, #666), linear-gradient(#666, #666), linear-gradient(#e4e4e4, #a4a4a4);
  background-size: 11px 2px, 2px 11px, 100% 100%;
  background-position: center;
  background-repeat: no-repeat;
}
.outline-list {
  flex: none;
  width: 16px;
  background: repeating-linear-gradient(#9a9a9a 0 1px, #333 1px 4px) 3px 4px / 10px 24px no-repeat, #333;
}
.cell-top { flex: none; height: 17px; width: 100%; }
.cell-row { flex: 1; display: flex; gap: 1px; }
.cell-key { flex: none; width: 7px; min-width: 7px; }
.cell-curve { flex: 1; min-width: 0; }

.panel { flex: 1; min-width: 0; display: flex; flex-direction: column; margin-top: 6px; border-top: 1px solid #666; }
.panel-menu {
  flex: none;
  height: 19px;
  display: flex;
  gap: 15px;
  padding: 1px 0 0 8px;
  align-items: center;
}
.panel-tools { height: 21px; margin-left: -7px; flex: none; }
.panel-tools .ic { width: 24px; height: 20px; }
.viewport {
  flex: 1;
  min-height: 0;
  position: relative;
  overflow: hidden;
  background: linear-gradient(#7c8da3, #2d333a);
}
.hud {
  display: grid;
  grid-template-columns: 56px 20px 20px 20px;
  column-gap: 45px;
  grid-auto-rows: 20px;
  margin: -4px 0 0 15px;
  align-items: center;
  font: 700 10px "DejaVu Sans", sans-serif;
}
.hud b { color: #0b4a2c; }
.hud em { color: #f4f4f4; font-style: normal; text-align: center; }
.scene { position: absolute; left: 0; top: 0; width: 922px; height: 507px; overflow: visible; }
```
